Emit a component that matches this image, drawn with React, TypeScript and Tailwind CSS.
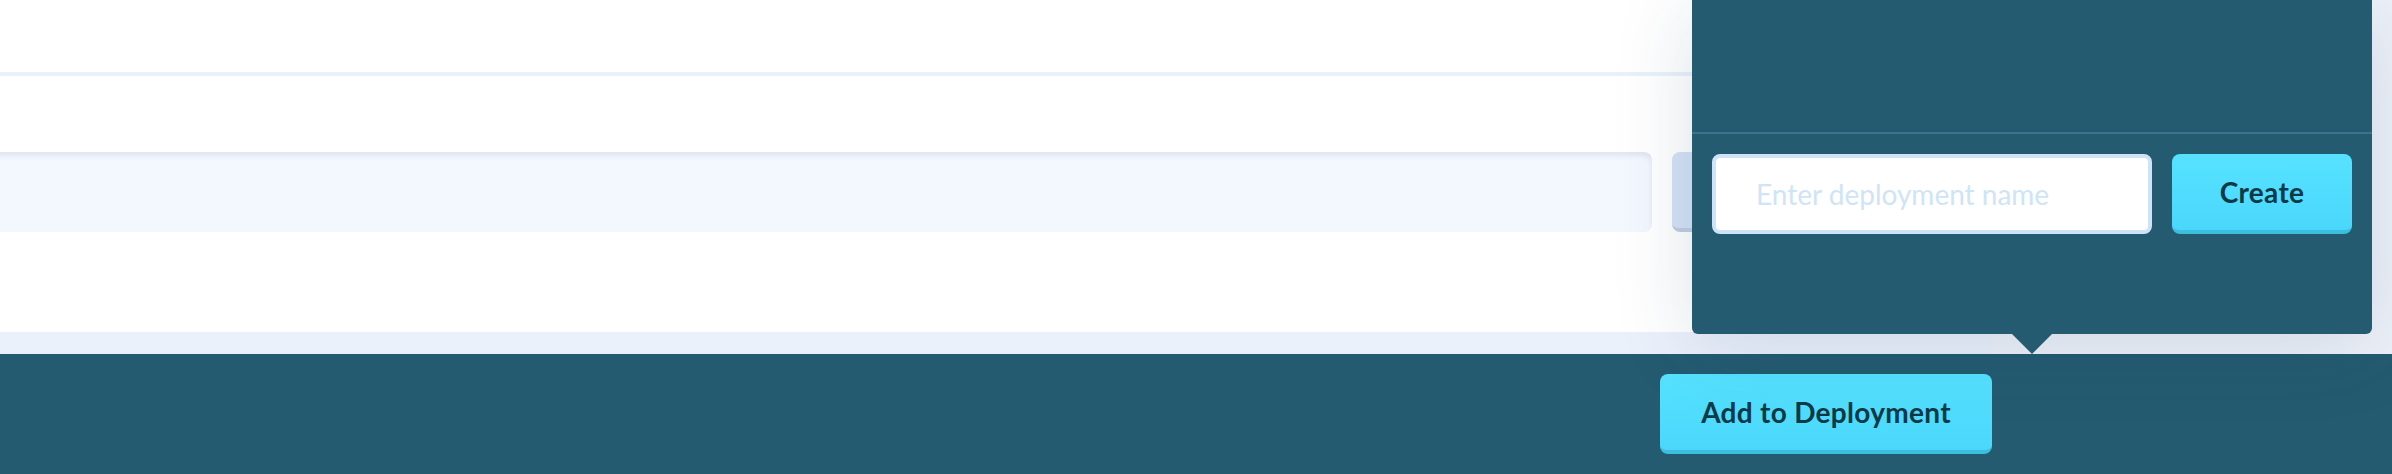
import React from 'react'

function CyanButton({ label, className = '' }: { label: string; className?: string }) {
  return (
    <button
      className={`flex items-center justify-center h-[80px] rounded-[8px] border-b-4 border-[#3cbfdf] bg-gradient-to-b from-[#56e2ff] to-[#4ad7fb] text-[28px] font-bold tracking-[0.3px] text-[#0e3947] ${className}`}
    >
      {label}
    </button>
  )
}

function DeploymentPopover() {
  return (
    <div className="absolute top-0 right-[20px] w-[680px] h-[334px] rounded-b-[6px] bg-[#245b70] shadow-[0_12px_80px_rgba(30,60,100,0.15)]">
      <div className="h-[132px]" />
      <div className="h-[2px] bg-[#3d7391]" />
      <div className="flex gap-[20px] p-[20px]">
        <input
          type="text"
          placeholder="Enter deployment name"
          className="flex-1 h-[80px] rounded-[8px] border-4 border-[#cee3f7] bg-white pl-[40px] text-[28px] text-[#0e3947] outline-none placeholder:text-[#cfe4f7]"
        />
        <CyanButton label="Create" className="w-[180px]" />
      </div>
      {/* little pointer down to the footer */}
      <div className="absolute top-full left-[320px] w-0 h-0 border-x-[20px] border-t-[20px] border-x-transparent border-t-[#245b70]" />
    </div>
  )
}

export default function App() {
  return (
    <div className="relative h-[474px] w-full overflow-hidden flex flex-col font-[family-name:Lato,sans-serif]">
      <div className="flex h-[354px]">
        <div className="flex-1 flex flex-col bg-[#ebf1fb]">
          <div className="bg-white h-[332px] flex flex-col">
            <div className="h-[72px] border-b-4 border-[#eaf1fb] box-content" />
            <div className="flex gap-[20px] pt-[76px] pb-[100px] -ml-[12px] pr-[140px]">
              <div className="flex-1 h-[80px] rounded-[8px] bg-[#f3f7fe] shadow-[inset_0_4px_5px_rgba(40,70,100,0.09)]" />
              <div className="w-[180px] h-[80px] rounded-[8px] bg-[#d4e2f5] border-b-4 border-[#c1cee0]" />
            </div>
          </div>
        </div>
        <div className="w-[400px] bg-[#eef2f9]" />
      </div>

      <div className="flex-1 bg-[#245b70] flex justify-end pr-[400px] pt-[20px]">
        <CyanButton label="Add to Deployment" className="w-[332px]" />
      </div>

      <DeploymentPopover />
    </div>
  )
}
